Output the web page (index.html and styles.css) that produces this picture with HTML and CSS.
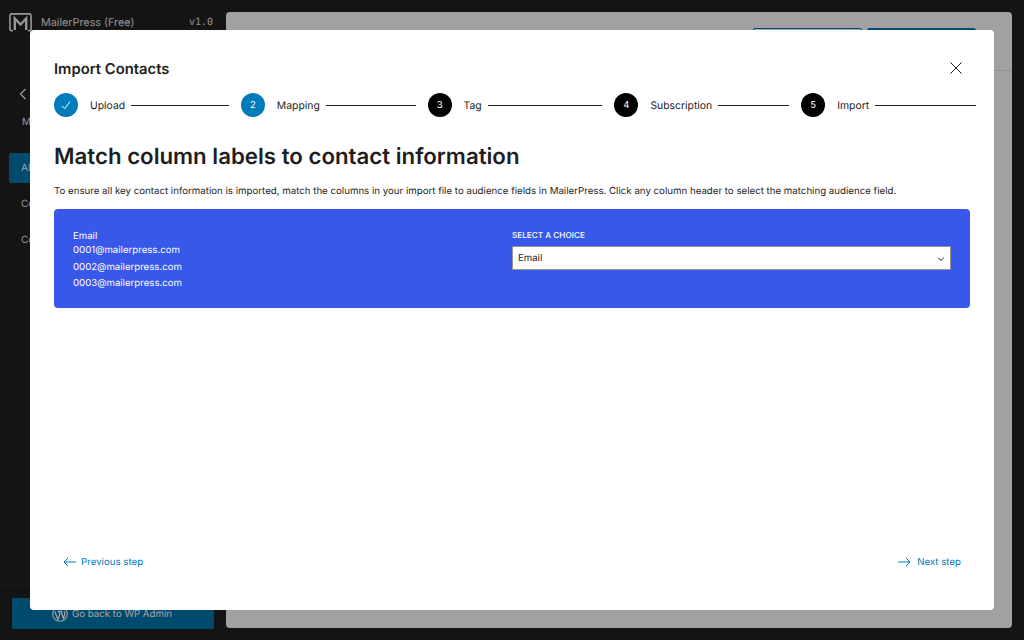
FILE: index.html
```html
<!DOCTYPE html>
<html lang="en">
<head>
<meta charset="utf-8">
<title>Import Contacts</title>
<link rel="stylesheet" href="styles.css">
</head>
<body>
<div class="app">
  <aside class="sidebar">
    <div class="brand">
      <svg class="logo" width="23" height="19" viewBox="0 0 23 19" fill="none" stroke="currentColor" stroke-width="1.600"><path d="M4 17.800H3A2.200 2.200 0 0 1 .9 15.600V3A2.200 2.200 0 0 1 3 .9h17A2.200 2.200 0 0 1 22.100 3v12.600a2.200 2.200 0 0 1-2.100 2.200h-1"/><path d="M5.800 17V5.500l5.700 6 5.700-6V17" stroke-width="2.400"/></svg>
      <span class="brand-name">MailerPress (Free)</span>
      <span class="version">v1.0</span>
    </div>
    <div class="side-body">
      <svg class="back" width="8" height="12" viewBox="0 0 8 12" fill="none" stroke="currentColor" stroke-width="1.300"><path d="M6.500 1 1.500 6l5 5"/></svg>
      <div class="side-title">Mailing</div>
      <nav class="side-nav">
        <a class="side-link active">All contacts</a>
        <a class="side-link">Contact tags</a>
        <a class="side-link">Contact lists</a>
      </nav>
    </div>
    <div class="side-foot">
      <a class="wp-back">
        <svg width="16" height="16" viewBox="0 0 16 16" fill="none" stroke="currentColor"><circle cx="8" cy="8" r="7.300" stroke-width="1.100"/><path d="M2.800 5.500 6 13.500l1.900-5.400-1-2.600M7 5.400h-1.300M6.800 5.400h3.400M9.200 5.500l2.300 7.200 1.300-4.200c.4-1.300-.3-2.200-.8-3" stroke-width="1.300"/></svg>
        Go back to WP Admin
      </a>
    </div>
  </aside>
  <main class="panel">
    <header class="panel-head">
      <span class="panel-title">Contacts</span>
      <div class="panel-actions">
        <span class="panel-btn"></span>
        <span class="panel-btn solid"></span>
      </div>
    </header>
  </main>
</div>

<div class="overlay">
  <section class="modal">
    <div class="modal-head">
      <h2 class="modal-title">Import Contacts</h2>
      <svg class="close" width="14" height="14" viewBox="0 0 14 14" fill="none" stroke="#1e1e1e" stroke-width="1"><path d="M1.500 1.500l11 11M12.500 1.500l-11 11"/></svg>
    </div>
    <ol class="steps">
      <li class="step">
        <span class="dot done"><svg width="12" height="12" viewBox="0 0 12 12" fill="none" stroke="#fff" stroke-width="1"><path d="M2 6.800 4.800 9.600 10 2.600"/></svg></span>
        <span class="step-label">Upload</span><span class="step-line"></span>
      </li>
      <li class="step">
        <span class="dot current">2</span>
        <span class="step-label">Mapping</span><span class="step-line"></span>
      </li>
      <li class="step">
        <span class="dot">3</span>
        <span class="step-label">Tag</span><span class="step-line"></span>
      </li>
      <li class="step">
        <span class="dot">4</span>
        <span class="step-label">Subscription</span><span class="step-line"></span>
      </li>
      <li class="step">
        <span class="dot">5</span>
        <span class="step-label">Import</span><span class="step-line"></span>
      </li>
    </ol>
    <h1 class="heading">Match column labels to contact information</h1>
    <p class="intro">To ensure all key contact information is imported, match the columns in your import file to audience fields in MailerPress. Click any column header to select the matching audience field.</p>
    <div class="mapping">
      <div class="column-data">
        <div class="column-name">Email</div>
        <div class="column-value">0001@mailerpress.com</div>
        <div class="column-value">0002@mailerpress.com</div>
        <div class="column-value">0003@mailerpress.com</div>
      </div>
      <div class="column-choice">
        <div class="choice-label">SELECT A CHOICE</div>
        <div class="select">
          <span>Email</span>
          <svg width="10" height="10" viewBox="0 0 10 10" fill="none" stroke="#1e1e1e" stroke-width="1"><path d="M2.200 3.800 5 6.400l2.800-2.600"/></svg>
        </div>
      </div>
    </div>
    <div class="modal-foot">
      <a class="nav-link prev">
        <svg width="14" height="10" viewBox="0 0 14 10" fill="none" stroke="currentColor" stroke-width="1"><path d="M13 5H1M5 1 1 5l4 4"/></svg>
        Previous step
      </a>
      <a class="nav-link next">
        <svg width="14" height="10" viewBox="0 0 14 10" fill="none" stroke="currentColor" stroke-width="1"><path d="M1 5h12M9 1l4 4-4 4"/></svg>
        Next step
      </a>
    </div>
  </section>
</div>
</body>
</html>
```
FILE: styles.css
```css
* { box-sizing: border-box; }
html, body { margin: 0; height: 100%; overflow: hidden; }
body { font-family: Inter, "Liberation Sans", sans-serif; color: #1e1e1e; background: #202020; text-rendering: geometricPrecision; font-optical-sizing: none; }

.app { display: flex; height: 640px; padding: 12px 12px 12px 0; }

.sidebar { width: 226px; flex: none; display: flex; flex-direction: column; color: #e4e4e4; margin-top: -12px; margin-bottom: -12px; }
.brand { display: flex; align-items: center; height: 44px; padding: 0 13px 0 9px; }
.logo { flex: none; color: #f0f0f0; }
.brand-name { margin-left: 9px; font-size: 10.800px; flex: 1; white-space: nowrap; }
.version { font: 10px "DejaVu Sans Mono", monospace; }
.side-body { flex: 1; padding: 44px 0 0 9px; }
.back { display: block; margin: 0 0 0 10px; color: #f0f0f0; }
.side-title { margin: 16px 0 0 13px; font-size: 10px; }
.side-nav { display: flex; flex-direction: column; margin-top: 25px; }
.side-link { display: flex; align-items: center; height: 30px; padding-left: 12px; font-size: 10px; margin-bottom: 6px; border-radius: 2px 0 0 2px; }
.side-link.active { background: #0075ad; color: #fff; }
.side-foot { height: 55px; border-top: 1px solid #2e2e2e; padding: 12px 12px 0; }
.wp-back { display: flex; align-items: center; gap: 4px; height: 31px; padding: 1px 0 0 40px; background: #0075ad; color: #fff; font-size: 9.700px; }

.panel { flex: 1; background: #fff; border-radius: 4px; }
.panel-head { display: flex; align-items: flex-start; justify-content: space-between; height: 59px; padding: 16px 36px 0 40px; border-bottom: 1px solid #e4e4e4; font-size: 11px; }
.panel-title { font-weight: 600; }
.panel-actions { display: flex; gap: 5px; }
.panel-btn { width: 109px; height: 28px; border: 1px solid #007cba; border-radius: 2px; }
.panel-btn.solid { background: #007cba; }

.overlay { position: fixed; inset: 0; padding: 30px; background: rgba(0, 0, 0, .37); }
.modal { display: flex; flex-direction: column; height: 580px; padding: 0 24px 0; background: #fff; border-radius: 4px; }

.modal-head { display: flex; align-items: center; justify-content: space-between; height: 60px; padding: 17px 7px 0 0; flex: none; }
.modal-title { margin: 0; font-size: 14.800px; font-weight: 600; }
.close { display: block; margin-top: -1px; }

.steps { display: grid; grid-template-columns: repeat(5, 1fr); gap: 12px; margin: 3px -6px 0 0; padding: 0; list-style: none; }
.step { display: flex; align-items: center; }
.dot { display: flex; align-items: center; justify-content: center; width: 24px; height: 24px; flex: none; border-radius: 50%; background: #000; color: #fff; font-size: 9.500px; font-weight: 400; }
.dot.done, .dot.current { background: #007cba; }
.step-label { margin-left: 12px; font-size: 10.400px; white-space: nowrap; }
.step-line { flex: 1; height: 1px; margin-left: 6px; background: #1e1e1e; }

.heading { margin: 25px 0 0; font-size: 22.250px; line-height: 29px; font-weight: 600; }
.intro { margin: 14px 0 0; font-size: 9.700px; line-height: 14px; white-space: nowrap; }

.mapping { display: grid; grid-template-columns: 1fr 1fr; height: 99px; margin-top: 10px; padding: 21px 19px 0; background: #3858e9; border-radius: 4px; color: #fff; font-size: 9.650px; }
.column-name { line-height: 13px; }
.column-value { line-height: 16.700px; }
.choice-label { font-size: 8.200px; font-weight: 500; line-height: 10px; }
.select { display: flex; align-items: center; justify-content: space-between; height: 24px; margin-top: 6px; padding: 1px 4px 0 5px; background: #fff; border: 1px solid #949494; color: #1e1e1e; font-size: 9.650px; }

.modal-foot { display: flex; justify-content: space-between; margin-top: auto; height: 58px; padding: 0 9px; color: #007cba; }
.nav-link { display: flex; align-items: center; gap: 4px; height: 20px; font-size: 9.700px; color: #007cba; }
.nav-link.next { gap: 6px; }
```
